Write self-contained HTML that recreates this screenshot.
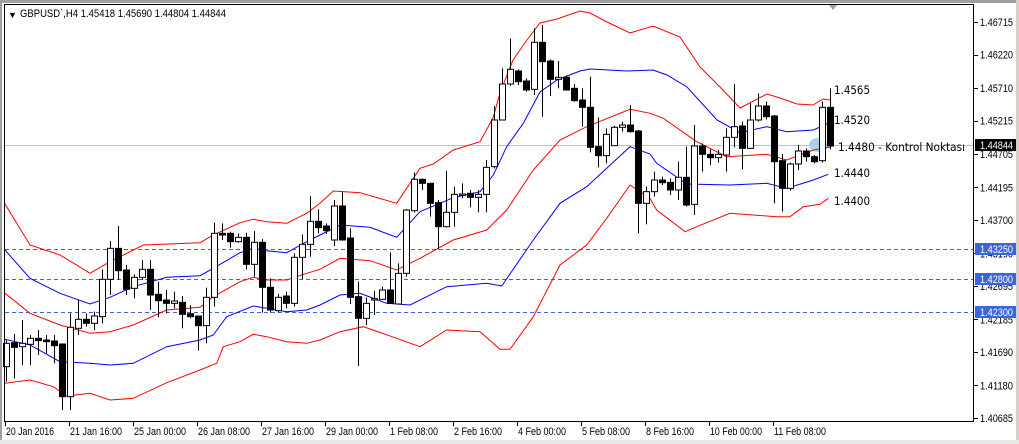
<!DOCTYPE html>
<html><head><meta charset="utf-8">
<style>
html,body{margin:0;padding:0;background:#fff;}
body{width:1019px;height:444px;overflow:hidden;position:relative;font-family:"Liberation Sans",Tahoma,sans-serif;}
svg{position:absolute;left:0;top:0;}
.ax{font-family:"Liberation Sans",sans-serif;font-size:11px;fill:#000;}
.lb{font-family:"DejaVu Sans","Liberation Sans",sans-serif;font-size:11.5px;fill:#000;}
</style></head>
<body>
<svg id="s" width="1019" height="444" xmlns="http://www.w3.org/2000/svg">
<rect x="0" y="0" width="1019" height="444" fill="#fff"/>
<rect x="0" y="0" width="1019" height="3" fill="#a0a0a0"/>
<rect x="0" y="0" width="2" height="444" fill="#a0a0a0"/>
<rect x="1016" y="0" width="3" height="444" fill="#d4d0c8"/>
<rect x="0" y="440" width="1019" height="4" fill="#e8e8e8"/>
<g id="g"></g>
<rect x="4.5" y="4.5" width="969" height="417" fill="none" stroke="#000" stroke-width="1"/>
<polygon points="829,5 837,5 833,10" fill="#a0a0a0"/>
<text x="8" y="18" font-size="9" fill="#000">&#9660;</text>
<text x="20" y="17" class="ax" textLength="206" lengthAdjust="spacingAndGlyphs">GBPUSD`,H4  1.45418 1.45690 1.44804 1.44844</text>
<text x="834" y="94" class="lb" textLength="36" lengthAdjust="spacingAndGlyphs">1.4565</text>
<text x="834" y="124" class="lb" textLength="36" lengthAdjust="spacingAndGlyphs">1.4520</text>
<text x="838" y="151" class="lb" textLength="127" lengthAdjust="spacingAndGlyphs">1.4480 - Kontrol Noktası</text>
<text x="834" y="177" class="lb" textLength="36" lengthAdjust="spacingAndGlyphs">1.4440</text>
<text x="834" y="205" class="lb" textLength="36" lengthAdjust="spacingAndGlyphs">1.4400</text>
<g id="ax"></g>
</svg>
<script>
var NS="http://www.w3.org/2000/svg",g=document.getElementById('g'),ax=document.getElementById('ax');
function el(p,t,a,txt){var e=document.createElementNS(NS,t);for(var k in a)e.setAttribute(k,a[k]);if(txt)e.textContent=txt;p.appendChild(e);return e;}
el(g,'line',{x1:5,y1:145.5,x2:974,y2:145.5,stroke:'#c0c0c0'});
[249.5,279.5,312.5].forEach(function(y){el(g,'line',{x1:5,y1:y,x2:974,y2:y,stroke:'#3c64dc','stroke-dasharray':'4,3'});});
el(g,'ellipse',{cx:818,cy:145,rx:9,ry:7,fill:'#a8d4e8'});
function conv(ox,oy,arr){var r=[];for(var i=0;i<arr.length;i+=2)r.push([ox+arr[i]/3,oy+arr[i+1]/3]);return r;}
function line(pts,c){el(g,'polyline',{points:pts.map(function(p){return p[0].toFixed(1)+','+p[1].toFixed(1)}).join(' '),fill:'none',stroke:c,'stroke-width':1});}
var topR=conv(0,180,[15,72,90,195,180,225,270,280,330,245,430,195,600,188,640,165,720,128,760,118,800,125,860,130,920,100,960,70]).concat(conv(320,10,[0,575,40,543,120,548,230,580,300,475,340,462,400,420,480,395,520,340])).concat([[493,118],[500,93],[513,60],[527,40],[540,23],[557,19],[580,11],[590,13],[607,22],[630,33],[653,26],[680,37],[700,67],[720,87],[740,108],[767,94],[780,98],[797,104],[813,105],[823,99],[830,100]]);
var bluU=conv(0,180,[15,210,90,295,180,340,270,372,330,352,400,320,500,292,600,287,640,265,720,218,760,205,800,212,860,218,920,185,960,165]).concat(conv(320,10,[0,678,60,645,150,652,230,682,300,605,400,563,480,545,520,495,560,410,610,340])).concat([[540,92],[557,80],[580,71],[590,69],[627,71],[653,70],[667,75],[687,87],[717,120]]).concat(conv(630,60,[330,218,410,200,470,215,550,210,595,190]));
var redM=conv(0,180,[15,340,90,400,180,435,270,460,330,455,400,435,500,390,600,382,640,350,720,305,760,292,800,300,860,300,920,280,960,268]).concat(conv(320,10,[0,780,60,745,150,752,230,780,300,745,400,690,500,660,560,600,640,480,720,390,800,350,930,298,990,310])).concat(conv(630,60,[100,175,200,245,290,290,410,283,470,300,550,270,600,262]));
var bluL=conv(0,180,[15,478,90,495,180,545,270,550,330,555,400,550,500,500,600,480,640,465,680,410,760,378,800,385,860,395,920,390,960,375]).concat(conv(320,10,[0,885,60,855,120,850,200,880,270,885,380,830,500,820,545,828,640,690,720,580,800,530,930,410,990,432])).concat(conv(630,60,[80,310,170,372,300,375,410,370,470,385,550,360,595,343]));
var redL=conv(0,180,[15,610,90,600,160,620,200,648,270,640,330,660,400,655,500,608,600,570,650,550,670,500,720,485,760,463,800,470,860,485,920,490,960,480]).concat(conv(320,10,[0,993,60,965,130,950,230,985,300,1010,380,960,480,965,540,1018,570,1018,640,920,720,765,800,705,860,625,930,525,990,565])).concat(conv(630,60,[80,450,165,515,200,500,300,460,440,470,480,470,520,440,570,433,595,415]));
function clean(a){a.sort(function(p,q){return p[0]-q[0]});var r=[];a.forEach(function(p){if(!r.length||p[0]-r[r.length-1][0]>1.5)r.push(p);});return r;}
[topR,redM,redL].forEach(function(a){line(clean(a),'#ff0000');});
[bluU,bluL].forEach(function(a){line(clean(a),'#0000ff');});
var c6=[['W',490,560,480,605],['B',488,502,462,595],['W',490,500,420,555],['W',475,493,465,555],['B',475,482,450,525],['B',480,485,465,520],['B',483,497,465,550],['B',492,650,490,690],['W',442,650,400,690],['W',418,445,360,465],['B',418,430,400,440],['W',408,430,395,450],['W',298,410,268,430],['W',205,298,183,345],['B',205,272,138,300],['B',270,328,255,345],['W',292,325,283,355],['W',268,292,240,300],['B',268,345,240,390],['B',343,362,305,412],['B',360,370,330,400],['W',363,370,335,385],['B',367,403,348,445],['B',401,410,375,415],['B',408,437,408,512],['W',352,437,323,490],['W',160,352,128,380],['B',160,165,130,180],['B',160,185,155,203],['W',172,185,160,188],['B',172,253,158,268],['W',187,253,153,290],['B',187,322,177,398],['B',322,390,295,398],['W',352,392,342,398],['B',348,370,335,385],['W',232,370,220,380],['W',193,232,163,298],['W',124,193,48,230],['B',124,143,88,160]];
var c7=[['B',648,662,640,672],['W',588,690,570,708],['B',588,690,545,692],['B',684,862,655,882],['B',860,925,815,1068],['W',880,925,862,945],['W',866,870,843,915],['W',840,868,830,870],['B',840,880,727,882],['W',790,882,760,882],['W',600,790,597,800],['W',508,602,487,608],['B',508,520,505,540],['B',520,580,518,620],['B',578,650,570,718],['W',607,650,483,652],['W',553,607,530,650],['W',552,556,520,565],['B',550,562,540,592],['W',553,562,540,607],['W',472,553,450,607],['W',330,470,288,475],['W',222,330,175,330],['W',178,222,85,228],['B',183,215,178,225],['B',213,240,205,245],['W',97,238,55,255],['B',97,155,45,320],['B',153,208,148,258],['W',202,208,153,235],['B',202,240,196,242],['B',235,272,222,275],['B',270,292,235,350],['B',292,412,200,427],['B',410,437,322,472],['W',373,437,355,460],['W',352,407,347,407],['W',345,352,335,365],['B',345,365,285,368],['B',363,580,360,670]];
var c8=[['W',395,430,380,493],['W',360,395,335,410],['B',360,368,350,375],['B',367,390,355,405],['W',352,390,305,420],['B',352,435,260,440],['W',258,433,195,465],['B',258,283,250,335],['B',283,293,268,315],['W',283,293,270,308],['W',232,285,205,335],['W',200,232,72,262],['B',198,265,185,328],['W',180,265,130,265],['W',138,180,100,185],['B',138,170,125,178],['B',168,305,165,430],['B',302,385,282,455],['W',312,385,308,392],['W',273,312,255,330],['B',273,290,265,305],['B',290,305,285,310],['W',142,302,125,308],['B',142,258,85,268]];
function draw(list,start,oy){list.forEach(function(c,k){var i=start+k,x=Math.round(5.5+8*i)+0.5;
 var bt=oy+c[1]/3,bb=oy+c[2]/3,hi=oy+c[3]/3,lo=oy+c[4]/3;
 el(g,'line',{x1:x,y1:hi,x2:x,y2:lo,stroke:'#000'});
 var h=Math.max(1,bb-bt);
 el(g,'rect',{x:x-3,y:bt,width:6,height:h,fill:c[0]=='W'?'#fff':'#000',stroke:'#000','stroke-width':1});});}
draw(c6,0,180);draw(c7,40,10);draw(c8,80,60);
var prices=['1.46715','1.46220','1.45710','1.45215','1.44705','1.44195','1.43700','1.43190','1.42695','1.42185','1.41690','1.41180','1.40685'];
prices.forEach(function(p){var y=22+(1.46715-parseFloat(p))*6567;el(ax,'line',{x1:974,y1:Math.round(y)+0.5,x2:978,y2:Math.round(y)+0.5,stroke:'#000'});el(ax,'text',{x:980,y:y+4,'class':'ax',textLength:33,lengthAdjust:'spacingAndGlyphs'},p);});
[[249,'1.43250','#3c64dc'],[279,'1.42800','#3c64dc'],[312,'1.42300','#3c64dc'],[145,'1.44844','#000']].forEach(function(a){el(ax,'rect',{x:975,y:a[0]-6,width:41,height:12,fill:a[2]});el(ax,'text',{x:980,y:a[0]+4,'class':'ax',style:'fill:#fff',textLength:33,lengthAdjust:'spacingAndGlyphs'},a[1]);});
var dates=['20 Jan 2016','21 Jan 16:00','25 Jan 00:00','26 Jan 08:00','27 Jan 16:00','29 Jan 00:00','1 Feb 08:00','2 Feb 16:00','4 Feb 00:00','5 Feb 08:00','8 Feb 16:00','10 Feb 00:00','11 Feb 08:00'];
dates.forEach(function(d,i){var x=5+64*i;var L=Math.round(d.length*4.35);el(ax,'line',{x1:x+0.5,y1:421,x2:x+0.5,y2:426,stroke:'#000'});el(ax,'text',{x:x+1,y:435,'class':'ax',textLength:L,lengthAdjust:'spacingAndGlyphs'},d);});
</script>
</body></html>
